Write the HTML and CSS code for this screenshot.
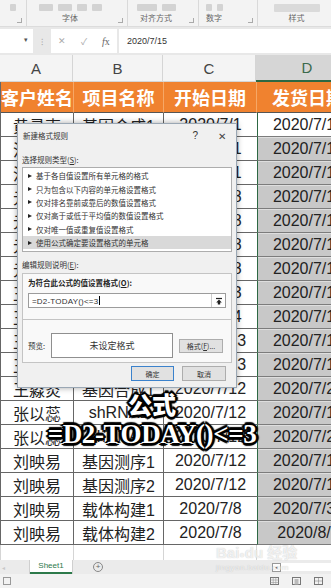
FILE: index.html
```html
<!DOCTYPE html>
<html lang="zh-CN">
<head>
  <meta charset="UTF-8">
  <meta name="viewport" content="width=device-width, initial-scale=1.0">
  <title>新建格式规则</title>
  <link rel="stylesheet" href="styles.css">
</head>
<body>
  <div class="ribbon">
    <div class="group g0">
      <div class="icons"><span class="ico w6"></span></div>
      <div class="group-label">&nbsp;</div>
      <span class="launcher"></span>
    </div>
    <div class="group g1">
      <div class="icons"><span class="ico w14"></span><span class="ico w14"></span><span class="ico w10"></span><span class="ico w10"></span></div>
      <div class="group-label">字体</div>
      <span class="launcher"></span>
    </div>
    <div class="group g2">
      <div class="icons"><span class="ico w20"></span><span class="ico w14"></span></div>
      <div class="group-label">对齐方式</div>
      <span class="launcher"></span>
    </div>
    <div class="group g3">
      <div class="icons"><span class="ico w6"></span><span class="ico w6"></span></div>
      <div class="group-label">数字</div>
      <span class="launcher"></span>
    </div>
    <div class="group g4">
      <div class="icons"><span class="ico w40"></span></div>
      <div class="group-label">样式</div>
    </div>
  </div>

  <div class="fbar">
    <div class="namebox"><span class="caret">▾</span></div>
    <div class="dots">⁝</div>
    <div class="fbtns"><span>✕</span><span>✓</span><span class="fx"><i>f</i>x</span></div>
    <div class="finput">2020/7/15</div>
  </div>

  <div class="sheet">
    <div class="row colhead">
      <div class="cell">A</div><div class="cell">B</div><div class="cell">C</div><div class="cell sel">D</div>
    </div>
    <div class="row title-row">
      <div class="cell">客户姓名</div><div class="cell">项目名称</div><div class="cell">开始日期</div><div class="cell">发货日期</div>
    </div>
    <div class="row"><div class="cell">黄寻克</div><div class="cell">基因合成1</div><div class="cell">2020/7/1</div><div class="cell d active">2020/7/15</div></div>
    <div class="row"><div class="cell">汪晓东</div><div class="cell">基因合成2</div><div class="cell">2020/7/1</div><div class="cell d">2020/7/16</div></div>
    <div class="row"><div class="cell">汪晓东</div><div class="cell">基因合成3</div><div class="cell">2020/7/1</div><div class="cell d">2020/7/16</div></div>
    <div class="row"><div class="cell">元小明</div><div class="cell">载体构建1</div><div class="cell">2020/7/8</div><div class="cell d">2020/7/17</div></div>
    <div class="row"><div class="cell">元小明</div><div class="cell">载体构建2</div><div class="cell">2020/7/8</div><div class="cell d">2020/7/17</div></div>
    <div class="row"><div class="cell">元小明</div><div class="cell">基因测序1</div><div class="cell">2020/7/8</div><div class="cell d">2020/7/18</div></div>
    <div class="row"><div class="cell">元小明</div><div class="cell">基因测序2</div><div class="cell">2020/7/8</div><div class="cell d">2020/7/18</div></div>
    <div class="row"><div class="cell">王淼炎</div><div class="cell">shRNA1</div><div class="cell">2020/7/3</div><div class="cell d">2020/7/15</div></div>
    <div class="row"><div class="cell">王淼炎</div><div class="cell">shRNA2</div><div class="cell">2020/7/4</div><div class="cell d">2020/7/16</div></div>
    <div class="row"><div class="cell">王淼炎</div><div class="cell">载体构建1</div><div class="cell">2020/7/13</div><div class="cell d">2020/7/17</div></div>
    <div class="row"><div class="cell">王淼炎</div><div class="cell">载体构建2</div><div class="cell">2020/7/13</div><div class="cell d">2020/7/18</div></div>
    <div class="row"><div class="cell">王淼炎</div><div class="cell">基因合成1</div><div class="cell">2020/7/12</div><div class="cell d">2020/7/20</div></div>
    <div class="row"><div class="cell">张以蕊</div><div class="cell">shRNA1</div><div class="cell">2020/7/12</div><div class="cell d">2020/7/15</div></div>
    <div class="row"><div class="cell">张以蕊</div><div class="cell">shRNA2</div><div class="cell">2020/7/12</div><div class="cell d">2020/7/21</div></div>
    <div class="row"><div class="cell">刘映易</div><div class="cell">基因测序1</div><div class="cell">2020/7/12</div><div class="cell d">2020/7/16</div></div>
    <div class="row"><div class="cell">刘映易</div><div class="cell">基因测序2</div><div class="cell">2020/7/12</div><div class="cell d">2020/7/16</div></div>
    <div class="row"><div class="cell">刘映易</div><div class="cell">载体构建1</div><div class="cell">2020/7/8</div><div class="cell d">2020/7/30</div></div>
    <div class="row"><div class="cell">刘映易</div><div class="cell">载体构建2</div><div class="cell">2020/7/8</div><div class="cell d">2020/8/1</div></div>
    <div class="row empty"><div class="cell"></div><div class="cell"></div><div class="cell"></div><div class="cell"></div></div>
  </div>

  <div class="tabs">
    <span class="tab-nav">◂</span>
    <span class="tab">Sheet1</span>
    <span class="add-sheet">+</span>
    <span class="hscroll"><span class="hs-btn">◂</span></span>
  </div>
  <div class="status">
    <span class="st-left"></span>
    <span class="views">
      <svg width="9" height="8" viewBox="0 0 9 8"><rect x="0.5" y="0.5" width="8" height="7" fill="none" stroke="#777"/><path d="M0.5 3H8.5M0.5 5.5H8.5M3.2 0.5V7.5M5.8 0.5V7.5" stroke="#999" stroke-width="0.6"/></svg>
      <svg width="9" height="8" viewBox="0 0 9 8"><rect x="0.5" y="0.5" width="8" height="7" fill="none" stroke="#777"/><rect x="2.5" y="2" width="4" height="5.5" fill="#bbb"/></svg>
      <svg width="9" height="8" viewBox="0 0 9 8"><rect x="0.5" y="0.5" width="8" height="7" fill="none" stroke="#777"/><path d="M4.5 0.5V7.5M0.5 4H8.5" stroke="#777" stroke-dasharray="1 1"/></svg>
    </span>
  </div>

  <div class="dialog">
    <div class="dlg-title">
      <span class="dlg-name">新建格式规则</span>
      <span class="dlg-help">?</span>
      <span class="dlg-close">✕</span>
    </div>
    <div class="dlg-body">
      <div class="dlg-label">选择规则类型(<u>S</u>):</div>
      <ul class="rule-list">
        <li>基于各自值设置所有单元格的格式</li>
        <li>只为包含以下内容的单元格设置格式</li>
        <li>仅对排名靠前或靠后的数值设置格式</li>
        <li>仅对高于或低于平均值的数值设置格式</li>
        <li>仅对唯一值或重复值设置格式</li>
        <li class="picked">使用公式确定要设置格式的单元格</li>
      </ul>
      <div class="dlg-label">编辑规则说明(<u>E</u>):</div>
      <div class="panel">
        <div class="panel-label">为符合此公式的值设置格式(<u>O</u>):</div>
        <div class="formula-input">
          <span class="formula">=D2-TODAY()&lt;=3<span class="text-caret"></span></span>
          <span class="collapse">
            <svg width="8" height="8" viewBox="0 0 8 8"><path d="M1 1.5H7" stroke="#222" stroke-width="1.2"/><path d="M4 2.5L1.2 5.5H2.8V7.5H5.2V5.5H6.8Z" fill="#222"/></svg>
          </span>
        </div>
        <div class="panel-sep"></div>
        <div class="preview-row">
          <span class="preview-label">预览:</span>
          <div class="preview-box">未设定格式</div>
          <button class="btn format-btn" type="button">格式(<u>F</u>)...</button>
        </div>
      </div>
      <div class="dlg-buttons">
        <button class="btn primary" type="button">确定</button>
        <button class="btn" type="button">取消</button>
      </div>
    </div>
  </div>

  <div class="caption">
    <div class="cap-title">公式</div>
    <div class="cap-formula">=D2-TODAY()&lt;=3</div>
  </div>

  <div class="watermark">
    <div class="wm-logo">Bai<span class="paw">●</span>du 经验</div>
    <div class="wm-url">jingyan.baidu.com</div>
  </div>
</body>
</html>
```

FILE: styles.css
```css
body {
  margin: 0;
  width: 331px;
  height: 588px;
  overflow: hidden;
  position: relative;
  background-color: #fff;
  color: #222;
  font-family: "Liberation Sans", "Noto Sans CJK SC", sans-serif;
}

/* ribbon */
.ribbon {
  display: flex;
  height: 27px;
  box-sizing: border-box;
  background-color: #f3f3f3;
  border-bottom: 1px solid #dcdcdc;
}
.group {
  position: relative;
  flex: none;
  display: flex;
  flex-direction: column;
  justify-content: space-between;
  align-items: center;
  box-sizing: border-box;
  border-right: 1px solid #d9d9d9;
}
.g0 { width: 27px; }
.g1 { width: 101px; padding-right: 14px; }
.g2 { width: 71px; padding-right: 14px; }
.g3 { width: 59px; padding-right: 28px; }
.g4 { width: 73px; border-right: none; padding-left: 4px; }
.icons {
  display: flex;
  gap: 5px;
  padding-top: 4px;
}
.ico {
  display: block;
  height: 7px;
  background-color: #d3d3d3;
  border-radius: 1px;
}
.w6 { width: 6px; }
.w10 { width: 10px; }
.w14 { width: 14px; }
.w20 { width: 20px; }
.w40 { width: 46px; height: 8px; background-color: #dadada; }
.group-label {
  font-size: 8px;
  line-height: 10px;
  color: #666;
  margin-bottom: 2px;
}
.launcher {
  position: absolute;
  right: 4px;
  bottom: 3px;
  width: 4px;
  height: 4px;
  border-right: 1px solid #aaa;
  border-bottom: 1px solid #aaa;
}

/* formula bar */
.fbar {
  display: flex;
  align-items: center;
  height: 28px;
  background-color: #e8e8e8;
  font-size: 9px;
}
.namebox {
  position: relative;
  width: 33px;
  height: 24px;
  background-color: #fff;
}
.caret {
  position: absolute;
  right: 5px;
  top: 7px;
  font-size: 7px;
  color: #555;
}
.dots {
  width: 18px;
  text-align: center;
  color: #aaa;
  font-size: 9px;
}
.fbtns {
  display: flex;
  align-items: center;
  justify-content: space-around;
  width: 66px;
  height: 24px;
  background-color: #fff;
  color: #aaa;
  font-size: 9px;
}
.fx {
  color: #666;
  font-family: "Liberation Serif", serif;
  font-size: 10px;
}
.finput {
  flex: 1;
  height: 24px;
  margin-left: 2px;
  padding-left: 8px;
  background-color: #fff;
  line-height: 24px;
  color: #333;
}

/* sheet */
.row {
  display: grid;
  grid-template-columns: 73px 90px 93px 103px;
  height: 24px;
  border-left: 1px solid #666;
}
.cell {
  display: flex;
  align-items: center;
  justify-content: center;
  box-sizing: border-box;
  white-space: nowrap;
  overflow: hidden;
  font-size: 16px;
  border-right: 1px solid #666;
  border-bottom: 1px solid #666;
}
.cell:nth-child(3) {
  border-right: none;
}
.cell.d {
  background-color: #c8c8c8;
  border-left: 1px solid #2d6843;
  border-bottom-color: #7c7c7c;
  box-shadow: inset 0 1px 0 #dedede;
}
.cell.d.active {
  background-color: #fff;
  box-shadow: none;
}
.colhead {
  height: 27px;
  border-left: none;
  background-color: #f4f4f4;
}
.colhead .cell {
  font-size: 15px;
  color: #444;
  border-right: 1px solid #d5d5d5;
  border-bottom: 1px solid #d5d5d5;
}
.colhead .cell.sel {
  background-color: #d6d6d6;
  color: #3b6a4c;
  border-bottom: 2px solid #2d6843;
}
.title-row {
  height: 31px;
  background-color: #f0822f;
}
.title-row .cell {
  color: #fff;
  font-size: 18px;
  font-weight: bold;
  border-right: 1px solid #f6a766;
  border-bottom: 1px solid #555;
}
.empty {
  height: 15px;
  border-left-color: #d5d5d5;
}
.empty .cell {
  border-right: 1px solid #d5d5d5;
  border-bottom: none;
}

/* sheet tabs and status */
.tabs {
  position: relative;
  display: flex;
  align-items: center;
  height: 14px;
  background-color: #ebebeb;
  font-size: 8px;
}
.tab-nav {
  width: 28px;
  padding-left: 2px;
  color: #c8c8c8;
  font-size: 6px;
}
.tab {
  width: 42px;
  height: 14px;
  box-sizing: border-box;
  background-color: #fff;
  color: #2d7a4b;
  text-align: center;
  line-height: 12px;
  border-bottom: 2px solid #2d7a4b;
  box-shadow: 1px 0 0 #cfcfcf, -1px 0 0 #cfcfcf;
}
.add-sheet {
  width: 8px;
  height: 8px;
  margin-left: 21px;
  border: 1px solid #888;
  border-radius: 50%;
  color: #666;
  font-size: 8px;
  line-height: 8px;
  text-align: center;
}
.hscroll {
  position: absolute;
  left: 272px;
  top: 3px;
  width: 59px;
  height: 8px;
  background-color: #fff;
}
.hs-btn {
  display: block;
  width: 7px;
  height: 7px;
  border: 1px solid #999;
  color: #666;
  font-size: 5px;
  line-height: 7px;
  text-align: center;
}
.status {
  display: flex;
  align-items: center;
  justify-content: space-between;
  height: 14px;
  padding: 0 8px 0 3px;
  background-color: #f2f2f2;
}
.st-left {
  width: 6px;
  height: 6px;
  border: 1px solid #999;
}
.views {
  display: flex;
  gap: 13px;
}

/* dialog */
.dialog {
  position: absolute;
  left: 17px;
  top: 123px;
  width: 220px;
  height: 265px;
  box-sizing: border-box;
  background-color: #f0f0f0;
  border: 1px solid #9aa7b4;
  box-shadow: 0 0 6px rgba(0, 0, 0, 0.35);
  font-family: "Noto Sans CJK SC", "Liberation Sans", sans-serif;
  font-size: 7.5px;
  color: #333;
}
.dlg-title {
  display: flex;
  align-items: center;
  height: 22px;
  padding: 0 10px 0 5px;
}
.dlg-name {
  flex: 1;
}
.dlg-help {
  margin-right: 20px;
  font-size: 10px;
  font-family: "Liberation Sans", sans-serif;
}
.dlg-close {
  font-size: 10px;
  color: #444;
}
.dlg-body {
  padding: 0 4px;
}
.dlg-label {
  height: 10px;
  line-height: 10px;
  margin-top: 9px;
}
.dlg-label + .panel {
  margin-top: 3px;
}
.rule-list + .dlg-label {
  margin-top: 8px;
}
.rule-list {
  list-style: none;
  margin: 2px 0 0;
  padding: 1px 0 0;
  height: 85px;
  box-sizing: border-box;
  background-color: #fff;
  border: 1px solid #adadad;
}
.rule-list li {
  display: flex;
  align-items: center;
  height: 13.4px;
  padding-left: 5px;
  color: #333;
}
.rule-list li::before {
  content: "";
  width: 0;
  height: 0;
  margin-right: 4px;
  border-left: 4px solid #222;
  border-top: 2.5px solid transparent;
  border-bottom: 2.5px solid transparent;
}
.rule-list li.picked {
  background-color: #d9d9d9;
}
.panel {
  height: 90px;
  box-sizing: border-box;
  padding: 4px 5px 0;
  background-color: #f9f9f9;
  border: 1px solid #c4c4c4;
}
.panel-label {
  height: 10px;
  line-height: 10px;
  font-weight: bold;
  color: #222;
}
.formula-input {
  display: flex;
  align-items: center;
  justify-content: space-between;
  height: 15px;
  margin-top: 5px;
  box-sizing: border-box;
  background-color: #fff;
  border: 1px solid #9c9c9c;
}
.formula {
  padding-left: 3px;
  font-family: "Liberation Sans", sans-serif;
  font-size: 8px;
  letter-spacing: 0.2px;
}
.text-caret {
  display: inline-block;
  width: 1px;
  height: 9px;
  margin-left: 1px;
  vertical-align: -1px;
  background-color: #000;
}
.collapse {
  display: flex;
  align-items: center;
  justify-content: center;
  width: 13px;
  height: 13px;
  border-left: 1px solid #ccc;
}
.panel-sep {
  height: 1px;
  margin: 11px -5px 0;
  background-color: #c4c4c4;
}
.preview-row {
  display: flex;
  align-items: center;
  margin-top: 13px;
  height: 25px;
}
.preview-label {
  width: 23px;
}
.preview-box {
  display: flex;
  align-items: center;
  justify-content: center;
  width: 122px;
  height: 25px;
  box-sizing: border-box;
  background-color: #fff;
  border: 1px solid #8f8f8f;
  font-size: 9px;
  color: #333;
}
.btn {
  height: 15px;
  padding: 0;
  box-sizing: border-box;
  background-color: #e1e1e1;
  border: 1px solid #adadad;
  font-family: "Noto Sans CJK SC", "Liberation Sans", sans-serif;
  font-size: 7px;
  color: #333;
}
.format-btn {
  width: 44px;
  height: 14px;
  margin-left: 6px;
}
.dlg-buttons {
  display: flex;
  justify-content: flex-end;
  gap: 8px;
  margin-top: 3px;
  padding-right: 6px;
}
.dlg-buttons .btn {
  width: 44px;
}
.btn.primary {
  width: 43px;
  border: 1.5px solid #3b82cc;
}

/* video caption */
.caption {
  position: absolute;
  left: 30px;
  top: 390px;
  width: 244px;
  text-align: center;
  color: #fff;
  text-shadow:
    2px 0 0 #000, -2px 0 0 #000, 0 2px 0 #000, 0 -2px 0 #000,
    1.5px 1.5px 0 #000, -1.5px 1.5px 0 #000, 1.5px -1.5px 0 #000, -1.5px -1.5px 0 #000,
    3px 0 1px #000, -3px 0 1px #000, 0 3px 1px #000, 0 -3px 1px #000;
}
.cap-title {
  font-family: "Noto Sans CJK SC", sans-serif;
  font-weight: 900;
  font-size: 24px;
  line-height: 28px;
}
.cap-formula {
  font-family: "Liberation Serif", serif;
  font-weight: bold;
  font-size: 27px;
  line-height: 32px;
  letter-spacing: -0.4px;
}

/* watermark */
.watermark {
  position: absolute;
  left: 216px;
  top: 545px;
  color: rgba(255, 255, 255, 0.75);
  text-shadow: 0 0 1px rgba(0, 0, 0, 0.25);
  font-family: "Liberation Sans", "Noto Sans CJK SC", sans-serif;
}
.wm-logo {
  font-size: 15px;
  font-weight: bold;
  line-height: 16px;
}
.paw {
  font-size: 9px;
}
.wm-url {
  font-size: 8px;
  line-height: 10px;
  letter-spacing: 0.5px;
}
```
